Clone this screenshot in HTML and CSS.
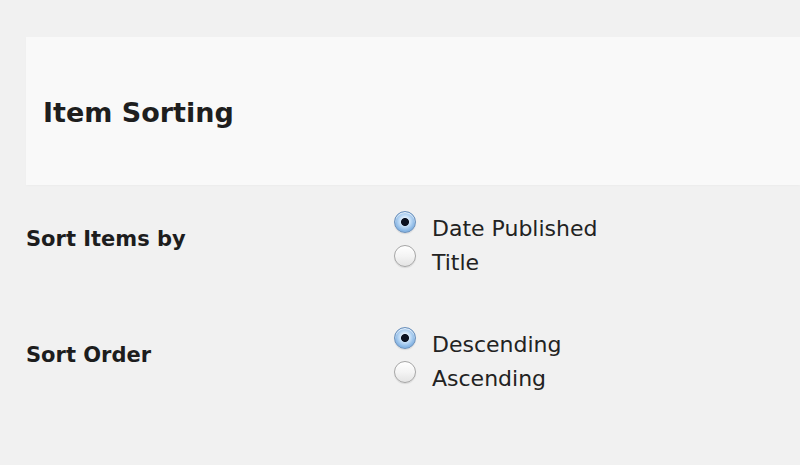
FILE: index.html
```html
<!DOCTYPE html>
<html lang="en">
<head>
<meta charset="utf-8">
<title>Item Sorting</title>
<link rel="stylesheet" href="styles.css">
</head>
<body>
<div class="panel">
  <h2 class="panel-title">Item Sorting</h2>
</div>
<div class="form">
  <div class="row">
    <div class="row-label">Sort Items by</div>
    <div class="options">
      <label class="option"><input class="radio" type="radio" name="sortby" checked><span>Date Published</span></label>
      <label class="option"><input class="radio" type="radio" name="sortby"><span>Title</span></label>
    </div>
  </div>
  <div class="row">
    <div class="row-label">Sort Order</div>
    <div class="options">
      <label class="option"><input class="radio" type="radio" name="order" checked><span>Descending</span></label>
      <label class="option"><input class="radio" type="radio" name="order"><span>Ascending</span></label>
    </div>
  </div>
</div>
</body>
</html>
```
FILE: styles.css
```css
html, body {
  margin: 0;
  padding: 0;
}
body {
  background: #f1f1f1;
  font-family: "DejaVu Sans", "Liberation Sans", sans-serif;
  color: #222;
  padding-left: 26px;
  overflow: hidden;
}
.panel {
  margin-top: 37px;
  height: 148px;
  box-sizing: border-box;
  padding: 60px 17px 0;
  background: #f9f9f9;
  box-shadow: 0 1px 2px rgba(0,0,0,0.025);
}
.panel-title {
  margin: 0;
  font-size: 27px;
  line-height: 31px;
  font-weight: bold;
  color: #1e1e1e;
}
.form {
  padding-top: 27px;
}
.row {
  display: grid;
  grid-template-columns: 368px 1fr;
  margin-bottom: 48px;
}
.row-label {
  padding-top: 10px;
  font-size: 21px;
  line-height: 34px;
  font-weight: bold;
  color: #1d1d1d;
}
.options {
  display: flex;
  flex-direction: column;
}
.option {
  display: flex;
  align-items: flex-start;
  font-size: 22px;
  line-height: 34px;
  color: #222;
}
.radio {
  appearance: none;
  -webkit-appearance: none;
  margin: -1px 16px 0 0;
  width: 22px;
  height: 22px;
  flex: none;
  border-radius: 50%;
  box-sizing: border-box;
  border: 1px solid #a6a6a6;
  background: linear-gradient(#ffffff, #f4f4f4 50%, #e4e4e4);
  box-shadow: 0 1px 1px rgba(0,0,0,0.1), inset 0 1px 1px rgba(255,255,255,0.9);
}
.radio:checked {
  border-color: #6b90bb;
  background:
    radial-gradient(circle at 50% 50%, #0c1322 0 3.6px, rgba(12,19,34,0) 4.4px),
    radial-gradient(circle at 50% 45%, #e6f1fc 0 3px, #bcd9f5 6px, #86b5e4 10px);
}
```
